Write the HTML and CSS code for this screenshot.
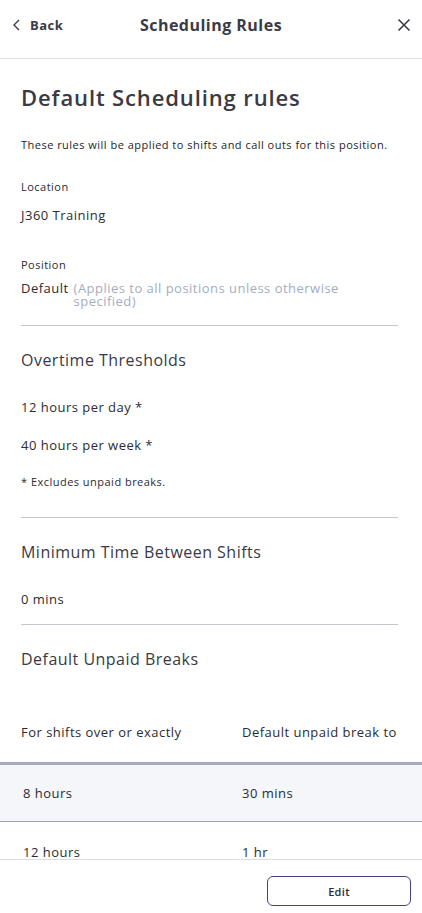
FILE: index.html
```html
<!DOCTYPE html>
<html>
<head>
<meta charset="utf-8">
<link rel="stylesheet" href="styles.css">
</head>
<body>
<div class="app">
  <header class="topbar">
    <div class="back">
      <svg width="10" height="12" viewBox="0 0 10 12"><path d="M7 1 L2 6 L7 11" fill="none" stroke="#3b3b45" stroke-width="1.4"/></svg>
      <span>Back</span>
    </div>
    <div class="title">Scheduling Rules</div>
    <div class="close">
      <svg width="14" height="14" viewBox="0 0 14 14"><path d="M1.5 1.5 L12.5 12.5 M12.5 1.5 L1.5 12.5" stroke="#3b3b45" stroke-width="1.6"/></svg>
    </div>
  </header>
  <div class="scroll">
    <main class="content">
      <h1 class="page-title">Default Scheduling rules</h1>
      <p class="desc">These rules will be applied to shifts and call outs for this position.</p>

      <div class="field">
        <div class="label">Location</div>
        <div class="value">J360 Training</div>
      </div>
      <div class="field field-pos">
        <div class="label">Position</div>
        <div class="value pos-row"><span>Default</span><span class="hint">(Applies to all positions unless otherwise specified)</span></div>
      </div>

      <hr class="divider">

      <section class="section">
        <h2 class="section-title">Overtime Thresholds</h2>
        <div class="item">12 hours per day *</div>
        <div class="item">40 hours per week *</div>
        <div class="note">* Excludes unpaid breaks.</div>
      </section>

      <hr class="divider">

      <section class="section">
        <h2 class="section-title">Minimum Time Between Shifts</h2>
        <div class="item item-last">0 mins</div>
      </section>

      <hr class="divider">

      <section class="section">
        <h2 class="section-title">Default Unpaid Breaks</h2>
      </section>
    </main>
    <div class="table">
      <div class="thead">
        <div class="c1">For shifts over or exactly</div>
        <div class="c2">Default unpaid break to</div>
      </div>
      <div class="row row-alt">
        <div class="c1">8 hours</div>
        <div class="c2">30 mins</div>
      </div>
      <div class="row">
        <div class="c1">12 hours</div>
        <div class="c2">1 hr</div>
      </div>
    </div>
  </div>
  <footer class="footer">
    <button class="edit">Edit</button>
  </footer>
</div>
</body>
</html>
```
FILE: styles.css
```css
* { box-sizing: border-box; }
html, body { margin: 0; padding: 0; }
body {
  font-family: "Open Sans", "DejaVu Sans", sans-serif;
  color: #2b2b33;
  background: #fff;
  letter-spacing: 0.03em;
}
.app {
  width: 422px;
  height: 913px;
  display: flex;
  flex-direction: column;
  overflow: hidden;
}
.topbar {
  height: 59px;
  flex: none;
  display: flex;
  align-items: center;
  justify-content: space-between;
  padding: 0 11px 0 12px;
  border-bottom: 1px solid #e2e2e4;
  position: relative;
}
.back {
  display: flex;
  align-items: center;
  gap: 8px;
  font-size: 13px;
  font-weight: 700;
  color: #3b3b45;
  margin-top: -8px;
}
.title {
  position: absolute;
  left: 0; right: 0;
  top: 14px;
  text-align: center;
  font-size: 16px;
  font-weight: 700;
  color: #3b3b45;
  pointer-events: none;
}
.close { margin-top: -8px; display: flex; }
.scroll {
  flex: 1;
  min-height: 0;
  overflow: hidden;
}
.content {
  padding: 0 24px 0 21px;
}
.page-title {
  margin: 23px 0 0;
  font-size: 22px;
  font-weight: 600;
  color: #3a3a44;
  line-height: 30px;
  letter-spacing: 0.04em;
}
.desc {
  margin: 25px 0 0;
  font-size: 11px;
  font-weight: 500;
  color: #1e1e26;
  line-height: 16px;
}
.field { margin-top: 26px; }
.field-pos { margin-top: 33px; }
.label {
  font-size: 11px;
  font-weight: 500;
  color: #2b2b33;
  line-height: 16px;
}
.value {
  margin-top: 11px;
  font-size: 13px;
  font-weight: 500;
  color: #2b2b33;
  line-height: 18px;
}
.pos-row { display: flex; gap: 5px; margin-top: 6px; }
.hint {
  color: #a4adbf;
  line-height: 13px;
  padding-top: 3px;
  width: 270px;
}
.divider {
  border: 0;
  border-top: 1px solid #c3c6ce;
  margin: 17px 0 0;
}
.section { padding-top: 22px; }
.section-title {
  margin: 0;
  font-size: 16px;
  font-weight: 500;
  color: #3a3a44;
  line-height: 24px;
}
.item {
  margin-top: 28px;
  font-size: 13px;
  font-weight: 500;
  line-height: 14px;
}
.item + .item { margin-top: 24px; }
.item-last { padding-bottom: 1px; }
.note {
  margin-top: 23px;
  padding-bottom: 11px;
  font-size: 11px;
  font-weight: 500;
  line-height: 14px;
}
.table { margin-top: 53px; }
.thead, .row {
  display: flex;
  font-size: 13px;
  font-weight: 500;
  color: #2b2b33;
}
.thead { padding: 0 0 22px 21px; line-height: 16px; }
.thead .c1 { width: 221px; }
.row { padding-left: 23px; height: 60px; align-items: center; }
.row .c1 { width: 219px; }
.row-alt {
  background: #f5f6fa;
  border-top: 3px solid #a2acbc;
  border-bottom: 1px solid #9ba5bd;
  height: 60px;
}
.footer {
  flex: none;
  height: 54px;
  border-top: 1px solid #dcdcdf;
  background: #fff;
  display: flex;
  justify-content: flex-end;
  align-items: flex-start;
  padding: 16px 11px 0 0;
}
.edit {
  width: 144px;
  height: 30px;
  border: 1px solid #4b3f7e;
  border-radius: 6px;
  background: #fff;
  font-family: inherit;
  letter-spacing: 0.03em;
  font-size: 11px;
  font-weight: 600;
  color: #2b2b33;
}
```
